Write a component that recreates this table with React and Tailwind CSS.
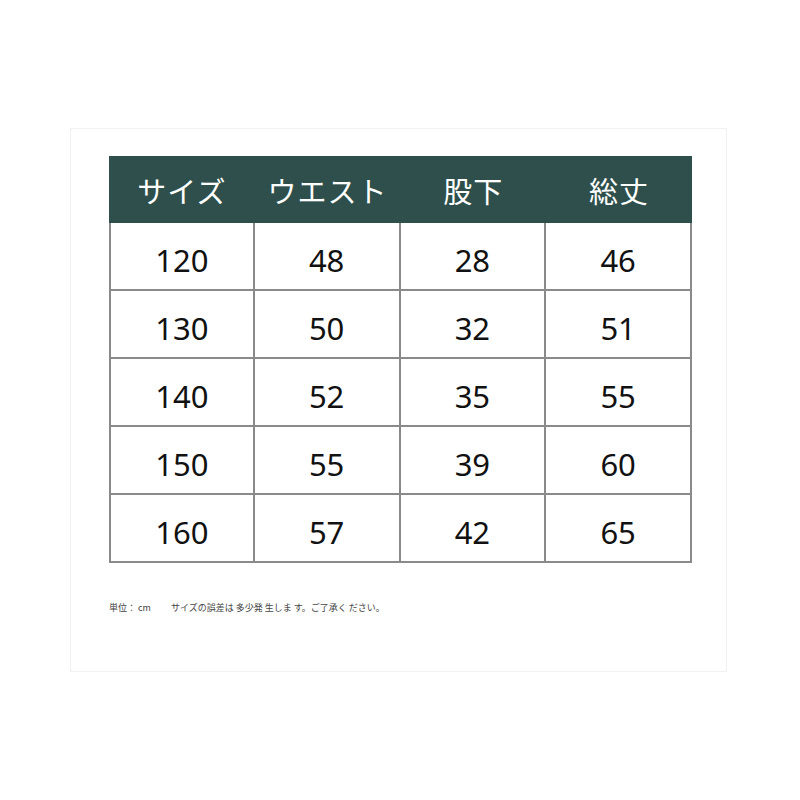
import React from 'react';

const headers = ['サイズ', 'ウエスト', '股下', '総丈'];

const rows = [
  ['120', '48', '28', '46'],
  ['130', '50', '32', '51'],
  ['140', '52', '35', '55'],
  ['150', '55', '39', '60'],
  ['160', '57', '42', '65'],
];

const App = () => {
  return (
    <div className="w-[800px] h-[800px] bg-white pt-[128px] pl-[70px]" style={{ fontFamily: '"Noto Sans", "Noto Sans CJK JP", sans-serif' }}>
      <div className="w-[657px] h-[544px] border border-[#f1f1f1] pt-[27px] pl-[38px]">
        <div className="w-[583px]">
          <div className="grid grid-cols-4 h-[67px] bg-[#2e4f4b] text-white">
            {headers.map((h) => (
              <div key={h} className="flex items-center justify-center pt-[2px] text-[29px] tracking-[1px]" style={{ fontFamily: '"Noto Sans CJK JP", sans-serif' }}>
                {h}
              </div>
            ))}
          </div>
          {rows.map((r, i) => (
            <div key={i} className="grid grid-cols-4 h-[68px]">
              {r.map((v, j) => (
                <div
                  key={j}
                  className={`flex items-center justify-center pt-[8px] border-b-2 border-r-2 border-[#8a8a8a] text-[31px] text-[#111] ${j === 0 ? 'border-l-2' : ''}`}
                >
                  {v}
                </div>
              ))}
            </div>
          ))}
        </div>
        <p className="mt-[38px] text-[9px] text-[#444] whitespace-pre" style={{ fontFamily: '"Noto Sans CJK JP", sans-serif' }}>
          {'単位： cm　　 サイズの誤差は 多少発 生しま す。ご了承く ださい。'}
        </p>
      </div>
    </div>
  );
};

export default App;
